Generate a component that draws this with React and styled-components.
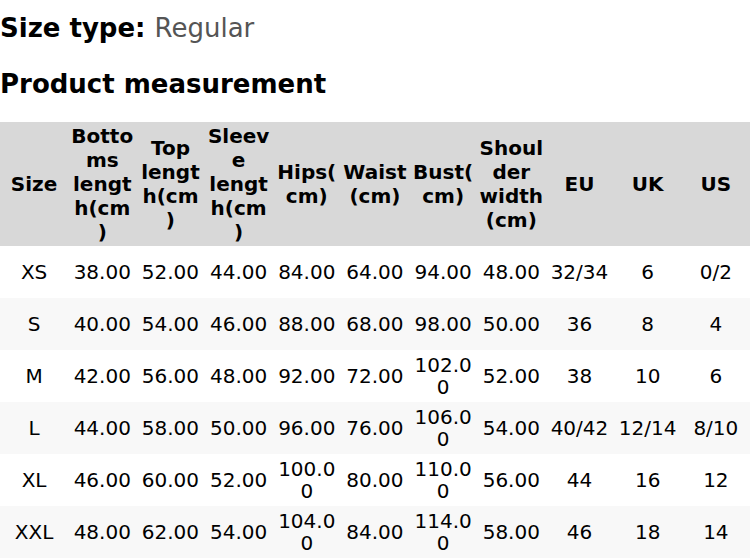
import React from 'react';
import styled, { createGlobalStyle } from 'styled-components';

const GlobalStyle = createGlobalStyle`
  html, body {
    margin: 0;
    padding: 0;
    background: #fff;
    font-family: "DejaVu Sans", sans-serif;
    color: #000;
  }
`;

const COLUMNS = [
  'Size',
  'Bottoms length(cm)',
  'Top length(cm)',
  'Sleeve length(cm)',
  'Hips(cm)',
  'Waist (cm)',
  'Bust(cm)',
  'Shoulder width (cm)',
  'EU',
  'UK',
  'US',
];

const ROWS = [
  ['XS', '38.00', '52.00', '44.00', '84.00', '64.00', '94.00', '48.00', '32/34', '6', '0/2'],
  ['S', '40.00', '54.00', '46.00', '88.00', '68.00', '98.00', '50.00', '36', '8', '4'],
  ['M', '42.00', '56.00', '48.00', '92.00', '72.00', '102.00', '52.00', '38', '10', '6'],
  ['L', '44.00', '58.00', '50.00', '96.00', '76.00', '106.00', '54.00', '40/42', '12/14', '8/10'],
  ['XL', '46.00', '60.00', '52.00', '100.00', '80.00', '110.00', '56.00', '44', '16', '12'],
  ['XXL', '48.00', '62.00', '54.00', '104.00', '84.00', '114.00', '58.00', '46', '18', '14'],
];

const Wrapper = styled.div`
  width: 750px;
  padding-top: 12px;
`;

const SizeType = styled.div`
  font-size: 26px;
  line-height: 32px;
  font-weight: bold;
`;

const SizeValue = styled.span`
  font-weight: normal;
  color: #555;
`;

const Heading = styled.h3`
  margin: 24px 0 22px;
  font-size: 26px;
  line-height: 32px;
  font-weight: bold;
`;

const Table = styled.table`
  width: 750px;
  table-layout: fixed;
  border-collapse: collapse;
  border-spacing: 0;
`;

const HeadCell = styled.th`
  background: #d8d8d8;
  font-size: 20px;
  font-weight: bold;
  line-height: 24px;
  height: 124px;
  padding: 2px 2px;
  box-sizing: border-box;
  text-align: center;
  vertical-align: middle;
  overflow-wrap: anywhere;
`;

const Row = styled.tr`
  background: ${props => (props.striped ? '#f8f8f8' : '#fff')};
`;

const Cell = styled.td`
  font-size: 20px;
  line-height: 22px;
  height: 52px;
  padding: 4px 2px;
  box-sizing: border-box;
  text-align: center;
  vertical-align: middle;
  overflow-wrap: anywhere;
`;

export default function App() {
  return (
    <Wrapper>
      <GlobalStyle />
      <SizeType>
        Size type: <SizeValue>Regular</SizeValue>
      </SizeType>
      <Heading>Product measurement</Heading>
      <Table>
        <thead>
          <tr>
            {COLUMNS.map(col => (
              <HeadCell key={col}>{col}</HeadCell>
            ))}
          </tr>
        </thead>
        <tbody>
          {ROWS.map((row, i) => (
            <Row key={row[0]} striped={i % 2 === 1}>
              {row.map((value, j) => (
                <Cell key={j}>{value}</Cell>
              ))}
            </Row>
          ))}
        </tbody>
      </Table>
    </Wrapper>
  );
}
